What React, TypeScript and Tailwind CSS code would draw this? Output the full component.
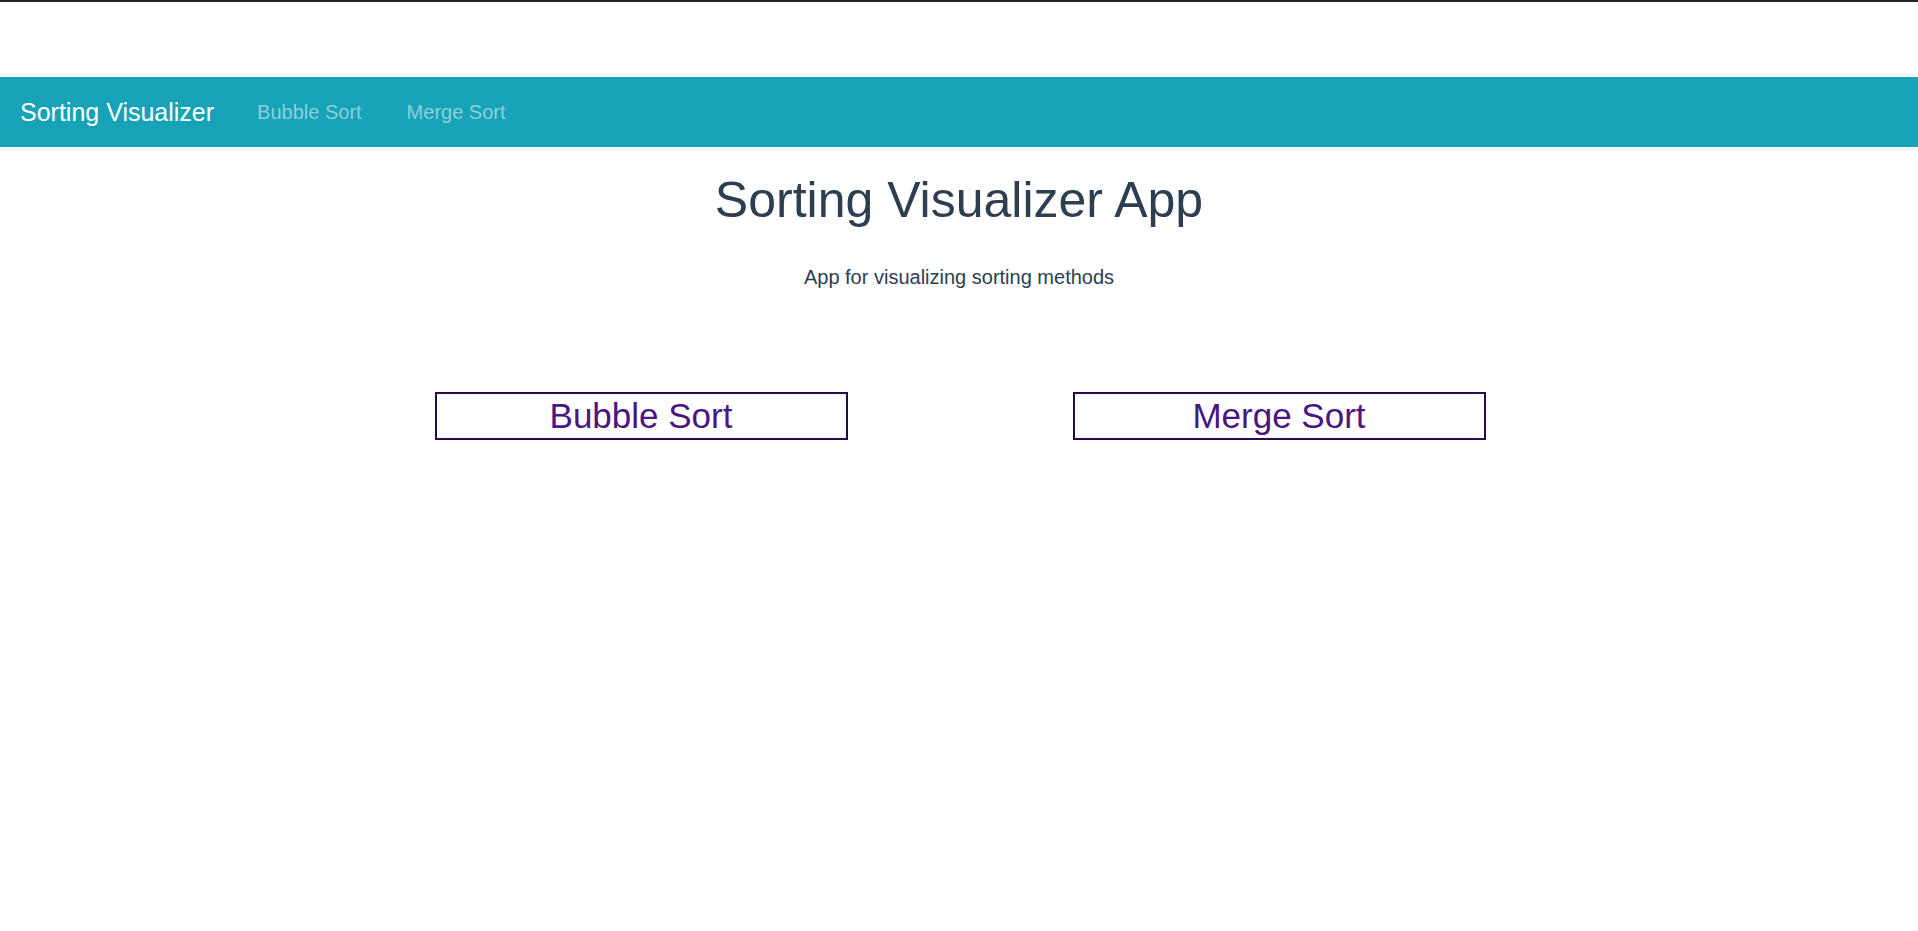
const links = ["Bubble Sort", "Merge Sort"];

const App = () => {
  return (
    <div
      className="min-h-screen border-t-2 border-[#222222] bg-white text-[#2c3e50]"
      style={{ fontFamily: '"Liberation Sans", Arial, sans-serif' }}
    >
      <nav className="mt-[75px] flex h-[70px] items-center bg-[#17a2b8] px-[20px]">
        <span className="text-[25px] leading-[30px] text-white">Sorting Visualizer</span>
        <div className="ml-[43px] flex gap-[45px]">
          {links.map((link) => (
            <a key={link} className="text-[20px] leading-[30px] text-[#8bd0db]">
              {link}
            </a>
          ))}
        </div>
      </nav>

      <main className="text-center">
        <h1 className="mt-[23px] text-[50px] leading-[60px]">Sorting Visualizer App</h1>
        <p className="mt-[32px] text-[20px] leading-[30px]">App for visualizing sorting methods</p>

        <div className="mt-[100px] flex justify-center gap-[225px] pl-[2px]">
          {links.map((link) => (
            <button
              key={link}
              className="h-[48px] w-[413px] border-2 border-[#2a0b4a] pt-[2px] pb-[2px] text-[35px] leading-[40px] text-[#4b1583]"
            >
              {link}
            </button>
          ))}
        </div>
      </main>
    </div>
  );
};

export default App;
